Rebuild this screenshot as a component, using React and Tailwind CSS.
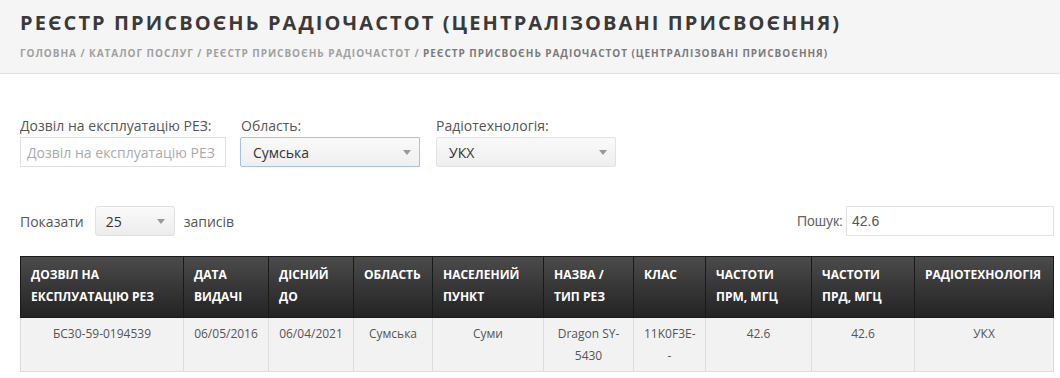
import React from 'react';

const columns = [
  { title: 'Дозвіл на експлуатацію РЕЗ', w: 'w-[163px]' },
  { title: 'Дата видачі', w: 'w-[85px]' },
  { title: 'Дісний до', w: 'w-[85px]' },
  { title: 'Область', w: 'w-[79px]' },
  { title: 'Населений пункт', w: 'w-[111px]' },
  { title: 'Назва / тип РЕЗ', w: 'w-[90px]' },
  { title: 'Клас', w: 'w-[72px]' },
  { title: 'Частоти ПРМ, МГц', w: 'w-[106px]' },
  { title: 'Частоти ПРД, МГц', w: 'w-[103px]' },
  { title: 'Радіотехнологія', w: 'w-[139px]' },
];

const row = [
  'БС30-59-0194539',
  '06/05/2016',
  '06/04/2021',
  'Сумська',
  'Суми',
  'Dragon SY-5430',
  '11K0F3E--',
  '42.6',
  '42.6',
  'УКХ',
];

const Caret = () => (
  <span className="ml-auto h-0 w-0 border-x-[4px] border-t-[5px] border-x-transparent border-t-[#999]" />
);

const App = () => {
  return (
    <div className="min-h-[378px] bg-white font-['Open_Sans',sans-serif] text-[#555]">
      <div className="h-[74px] border-b border-[#e3e3e3] bg-[#f5f5f5] px-5 pt-[10px]">
        <h1 className="text-[20px] font-bold leading-[26px] tracking-[2.1px] text-[#3a3a3a]">
          РЕЄСТР ПРИСВОЄНЬ РАДІОЧАСТОТ (ЦЕНТРАЛІЗОВАНІ ПРИСВОЄННЯ)
        </h1>
        <div className="mt-[10px] text-[10px] font-bold leading-[14px] tracking-[0.95px] text-[#a0a0a0]">
          ГОЛОВНА / КАТАЛОГ ПОСЛУГ / РЕЄСТР ПРИСВОЄНЬ РАДІОЧАСТОТ /{' '}
          <span className="text-[#7a7a7a]">
            РЕЄСТР ПРИСВОЄНЬ РАДІОЧАСТОТ (ЦЕНТРАЛІЗОВАНІ ПРИСВОЄННЯ)
          </span>
        </div>
      </div>

      <div className="flex px-5 pt-[42px] text-[14px]">
        <div className="w-[220px]">
          <div className="mb-[2px] leading-[19px] text-[#555]">Дозвіл на експлуатацію РЕЗ:</div>
          <div className="flex h-[30px] w-[206px] items-center overflow-hidden whitespace-nowrap border border-[#e0e0e0] px-[6px] text-[14px] text-[#aaa]">
            Дозвіл на експлуатацію РЕЗ
          </div>
        </div>
        <div className="w-[196px]">
          <div className="mb-[2px] pl-[1px] leading-[19px]">Область:</div>
          <div className="flex h-[30px] w-[180px] items-center rounded-l-[2px] border border-[#a8bfe6] bg-gradient-to-b from-[#fafafa] to-[#eeeeee] pl-[12px] pr-[8px] text-[#333]">
            Сумська
            <Caret />
          </div>
        </div>
        <div className="w-[180px]">
          <div className="mb-[2px] leading-[19px]">Радіотехнологія:</div>
          <div className="flex h-[30px] w-[180px] items-center rounded-[2px] border border-[#e2e2e2] bg-gradient-to-b from-[#fafafa] to-[#eeeeee] pl-[12px] pr-[8px] text-[#333]">
            УКХ
            <Caret />
          </div>
        </div>
      </div>

      <div className="flex items-center justify-between pl-5 pr-[6px] pt-[39px] text-[14px]">
        <div className="flex items-center">
          <span>Показати</span>
          <div className="ml-[11px] flex h-[30px] w-[80px] items-center rounded-[3px] border border-[#e0e0e0] bg-gradient-to-b from-[#fafafa] to-[#ececec] pl-[10px] pr-[9px] text-[#333]">
            25
            <Caret />
          </div>
          <span className="ml-[9px]">записів</span>
        </div>
        <div className="flex items-center font-['Liberation_Sans',sans-serif] text-[14px]">
          <span className="mr-[3px] text-[#666]">Пошук:</span>
          <div className="flex h-[30px] w-[208px] items-center border border-[#e3e3e3] px-[5px] text-[#555]">
            42.6
          </div>
        </div>
      </div>

      <div className="px-5 pt-[20px]">
        <table className="w-[1034px] table-fixed border-collapse text-[12px]">
          <thead>
            <tr className="bg-gradient-to-b from-[#4b4b4b] to-[#232323]">
              {columns.map((c) => (
                <th
                  key={c.title}
                  className={`${c.w} h-[61px] border border-[#1a1a1a] px-[10px] pb-[8px] pt-[7px] text-left align-top font-bold uppercase leading-[22px] text-white`}
                >
                  {c.title}
                </th>
              ))}
            </tr>
          </thead>
          <tbody>
            <tr className="bg-[#f2f2f2]">
              {row.map((v, i) => (
                <td
                  key={i}
                  className="h-[54px] border border-[#dcdcdc] px-[10px] pt-[5px] text-center align-top leading-[22px] text-[#555]"
                >
                  {v}
                </td>
              ))}
            </tr>
          </tbody>
        </table>
      </div>
    </div>
  );
};

export default App;
